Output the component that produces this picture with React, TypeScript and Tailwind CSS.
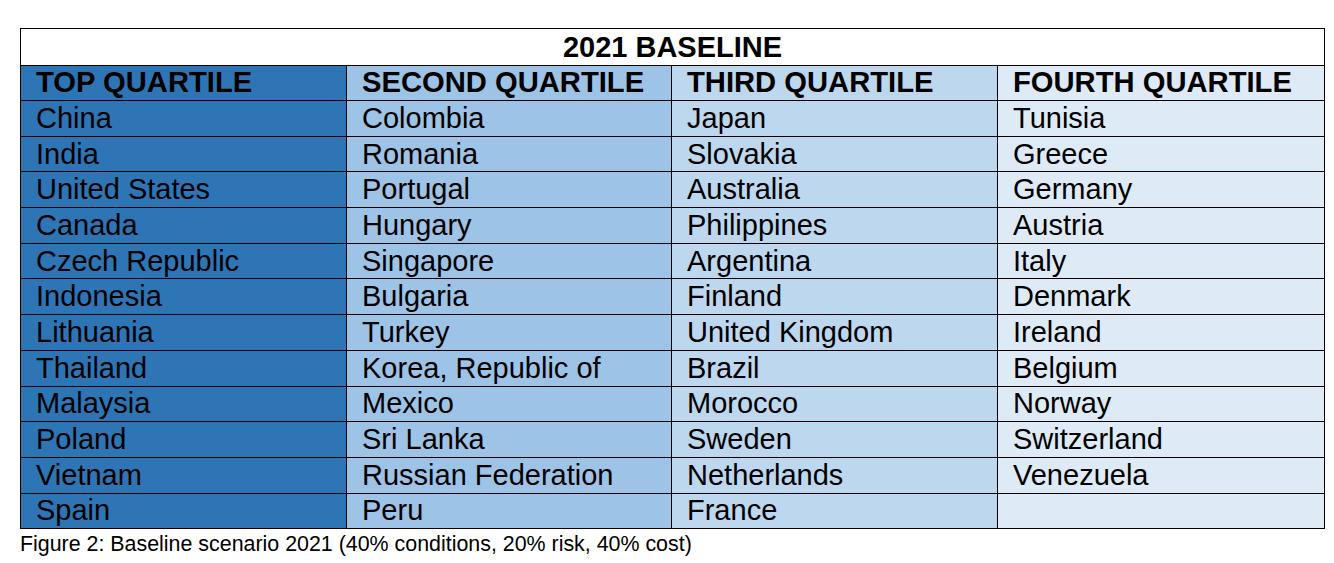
import React from "react";

const rows: [string, string, string, string][] = [
  ["China", "Colombia", "Japan", "Tunisia"],
  ["India", "Romania", "Slovakia", "Greece"],
  ["United States", "Portugal", "Australia", "Germany"],
  ["Canada", "Hungary", "Philippines", "Austria"],
  ["Czech Republic", "Singapore", "Argentina", "Italy"],
  ["Indonesia", "Bulgaria", "Finland", "Denmark"],
  ["Lithuania", "Turkey", "United Kingdom", "Ireland"],
  ["Thailand", "Korea, Republic of", "Brazil", "Belgium"],
  ["Malaysia", "Mexico", "Morocco", "Norway"],
  ["Poland", "Sri Lanka", "Sweden", "Switzerland"],
  ["Vietnam", "Russian Federation", "Netherlands", "Venezuela"],
  ["Spain", "Peru", "France", ""],
];

const colBg = ["bg-[#2e75b6]", "bg-[#9dc3e6]", "bg-[#bdd7ee]", "bg-[#deebf7]"];

export default function App() {
  return (
    <div
      className="w-[1334px] h-[563px] bg-white text-black"
      style={{ fontFamily: '"Liberation Sans", Arial, sans-serif' }}
    >
      <div className="pt-[28px] pl-[20px]">
        <table className="border-collapse w-[1304px] table-fixed">
          <colgroup>
            <col className="w-[326px]" />
            <col className="w-[325px]" />
            <col className="w-[326px]" />
            <col className="w-[327px]" />
          </colgroup>
          <tbody>
            <tr className="h-[37px]">
              <td
                colSpan={4}
                className="border border-black text-center font-bold text-[29px] leading-none p-0"
              >
                2021 BASELINE
              </td>
            </tr>
            <tr className="h-[35px]">
              {["TOP QUARTILE", "SECOND QUARTILE", "THIRD QUARTILE", "FOURTH QUARTILE"].map(
                (h, i) => (
                  <td
                    key={h}
                    className={`border border-black font-bold text-[29.2px] leading-none pl-[15px] p-0 whitespace-nowrap ${colBg[i]}`}
                  >
                    {h}
                  </td>
                )
              )}
            </tr>
            {rows.map((r, ri) => (
              <tr key={ri} className="h-[35.7px]">
                {r.map((c, i) => (
                  <td
                    key={i}
                    className={`border border-black text-[29px] leading-none pl-[15px] p-0 whitespace-nowrap ${colBg[i]}`}
                  >
                    {c}
                  </td>
                ))}
              </tr>
            ))}
          </tbody>
        </table>
        <div className="text-[21.4px] leading-none mt-[5px]">
          Figure 2: Baseline scenario 2021 (40% conditions, 20% risk, 40% cost)
        </div>
      </div>
    </div>
  );
}
